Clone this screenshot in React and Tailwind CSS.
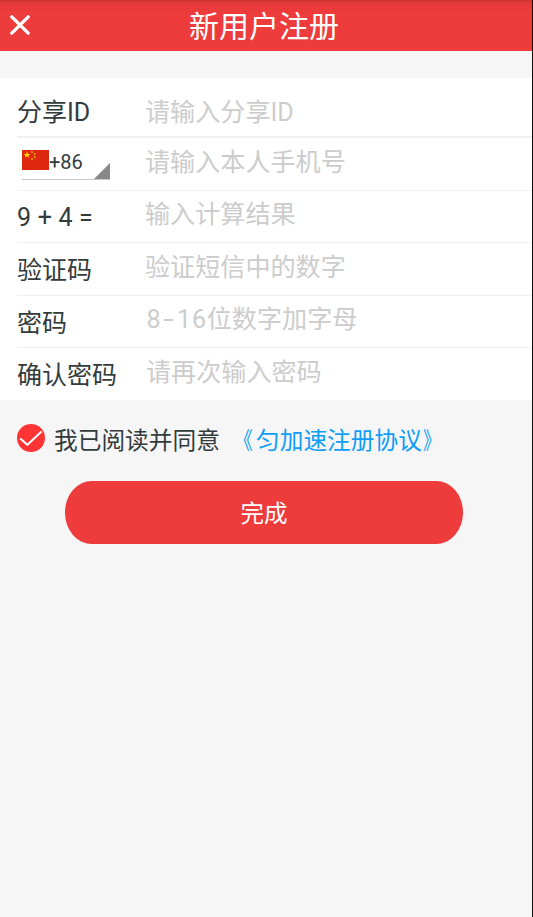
import { useState } from "react";

const fields = [
  { id: "share", label: "分享ID", placeholder: "请输入分享ID", row: "h-[60px] border-b-2", labelPad: "pt-[20px]", inputPad: "pt-[20px]" },
  { id: "phone", placeholder: "请输入本人手机号", row: "h-[53px] border-b", labelPad: "pt-[10px]", inputPad: "pt-[10px]" },
  { id: "sum", label: "9 + 4 =", placeholder: "输入计算结果", row: "h-[52px] border-b", labelPad: "pt-[12px] tracking-[0.2px]", inputPad: "pt-[9px]" },
  { id: "code", label: "验证码", placeholder: "验证短信中的数字", row: "h-[53px] border-b", labelPad: "pt-[13px]", inputPad: "pt-[10px]" },
  { id: "password", label: "密码", placeholder: "位数字加字母", prefix: "8-16", row: "h-[52px] border-b", labelPad: "pt-[13px]", inputPad: "pt-[9px] pl-px", secret: true },
  { id: "confirm", label: "确认密码", placeholder: "请再次输入密码", row: "h-[52px]", labelPad: "pt-[13px]", inputPad: "pt-[10px] pl-px", secret: true },
];

function Flag() {
  return (
    <svg width="27" height="20" viewBox="0 0 27 20" className="shrink-0">
      <rect width="27" height="20" fill="#de2910" />
      <path fill="#ffde00" d="M5 1.6l.9 2.3h2.5l-2 1.5.75 2.4L5 6.3 2.85 7.8l.75-2.4-2-1.5h2.5z" />
      <g fill="#e8ae08">
        <circle cx="10" cy="2" r=".9" />
        <circle cx="12.6" cy="4" r=".9" />
        <circle cx="12.6" cy="7" r=".9" />
        <circle cx="10" cy="9" r=".9" />
      </g>
    </svg>
  );
}

// 国家区号选择
function CountryCode() {
  return (
    <button className="ml-[5px] mt-[5px] flex h-[37px] w-[88px] border-b border-[#c8c8c8] text-left">
      <span className="mt-[7px] flex">
        <Flag />
      </span>
      <span className="mt-[7px] text-[20px] leading-[24px]">+86</span>
      <svg width="16" height="16" viewBox="0 0 16 16" className="-mb-px ml-auto mt-[20px] shrink-0">
        <path d="M16 0v16H0z" fill="#888" />
      </svg>
    </button>
  );
}

function Field({ field, value, onChange }) {
  return (
    <div className={`flex border-[#f0f0f0] ${field.row}`}>
      <div className="w-[128px] shrink-0">
        {field.label ? (
          <label htmlFor={field.id} className={`block text-[25px] leading-[30px] whitespace-nowrap ${field.labelPad}`}>
            {field.label}
          </label>
        ) : (
          <CountryCode />
        )}
      </div>
      <div className={`relative flex-1 text-[25.1px] leading-[30px] text-[#ccc] ${field.inputPad}`}>
        {!value && (
          <span className="flex">
            {/* 密码框的数字为等宽 */}
            {field.prefix?.split("").map((c, i) => (
              <span key={i} className="w-[15.2px] text-center">
                {c === "-" ? <span className="inline-block scale-x-150">{c}</span> : c}
              </span>
            ))}
            <span>{field.placeholder}</span>
          </span>
        )}
        <input
          id={field.id}
          type={field.secret ? "password" : "text"}
          value={value}
          onChange={(e) => onChange(field.id, e.target.value)}
          className="absolute inset-0 w-full bg-transparent text-[#333b3d] outline-none"
        />
      </div>
    </div>
  );
}

export default function App() {
  const [values, setValues] = useState({});
  const [agreed, setAgreed] = useState(true);

  const handleChange = (id, value) => {
    setValues({ ...values, [id]: value });
  };

  return (
    <main className="h-[917px] w-[533px] overflow-hidden border-r border-[#0c0c0c] bg-[#f6f6f6] font-['Roboto','Noto_Sans_CJK_SC',sans-serif] text-[#333b3d]">
      {/* 标题栏 */}
      <header className="flex h-[51px] bg-[#ee3b3b] bg-linear-to-b from-[#c93433] via-[#e33939] via-[3px] to-[#ee3b3b] to-[12px] text-white">
        <button className="ml-[10px] mt-[15px] h-5 w-5">
          <svg width="20" height="20" viewBox="0 0 20 20" stroke="currentColor" strokeWidth="3.3" strokeLinecap="round">
            <path d="M1.8 1.8l16.4 16.4M18.2 1.8L1.8 18.2" />
          </svg>
        </button>
        <h1 className="ml-[159px] mt-[9px] text-[30px] leading-[36px]">新用户注册</h1>
      </header>

      {/* 注册表单 */}
      <section className="mt-[27px] bg-white pl-[17px]">
        {fields.map((field) => (
          <Field key={field.id} field={field} value={values[field.id] || ""} onChange={handleChange} />
        ))}
      </section>

      {/* 协议 */}
      <div className="mt-[24px] flex h-[30px] pl-[17px] text-[23.7px] leading-[30px]">
        <button onClick={() => setAgreed(!agreed)} className="h-7 w-7">
          <svg width="28" height="28" viewBox="0 0 28 28" fill="none">
            <circle cx="14" cy="14" r="14" fill={agreed ? "#ff3434" : "#ccc"} />
            <path d="M3.2 14.5l7.2 6.3L24.5 7.5" stroke="#fff" strokeWidth="2" />
          </svg>
        </button>
        <span className="ml-[9px] mt-[2px]">我已阅读并同意</span>
        <a href="#" className="ml-[9px] mt-[2px] text-[#109df5]">
          <span className="mr-[3.5px] inline-block origin-right scale-x-80">《</span>
          匀加速注册协议
          <span className="ml-[1.5px] inline-block origin-left scale-x-75">》</span>
        </a>
      </div>

      <button className="ml-[65px] mt-[27px] block h-[63px] w-[398px] rounded-[27px/31px] bg-[#ee3b3b] pt-[4px] text-[23.5px] text-white">
        完成
      </button>
    </main>
  );
}
